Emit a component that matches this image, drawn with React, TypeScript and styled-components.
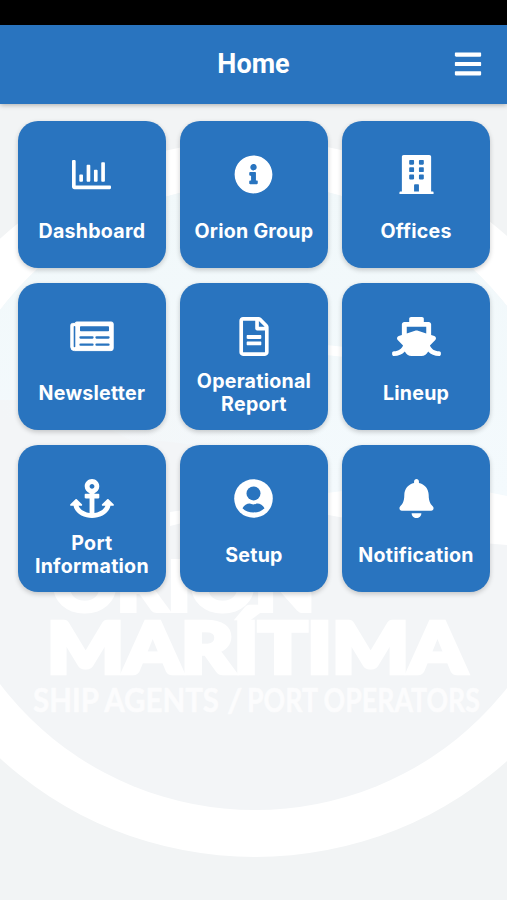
import React from 'react';
import styled, { createGlobalStyle } from 'styled-components';
import { FaRegChartBar, FaInfoCircle, FaBuilding, FaRegFileAlt, FaShip, FaAnchor, FaBell, FaBars } from 'react-icons/fa';

const GlobalStyle = createGlobalStyle`
  * { box-sizing: border-box; }
  body { margin: 0; background: #f2f4f5; }
`;

const Screen = styled.div`
  position: relative;
  width: 507px;
  height: 900px;
  display: flex;
  flex-direction: column;
  overflow: hidden;
  background: #f2f4f5;
  font-family: Inter, "Liberation Sans", sans-serif;
`;

const StatusBar = styled.div`
  position: relative;
  height: 25px;
  flex: none;
  background: #000;
`;

const Header = styled.header`
  position: relative;
  height: 78.5px;
  flex: none;
  display: grid;
  grid-template-columns: 1fr auto 1fr;
  align-items: center;
  padding: 0 24px;
  background: #2974bf;
  color: #fff;
  box-shadow: 0 1px 5px rgba(0, 0, 0, 0.3);
`;

const Title = styled.h1`
  grid-column: 2;
  margin: 0;
  font: 700 27px/32px Roboto, sans-serif;
`;

const MenuButton = styled.button`
  justify-self: end;
  display: flex;
  padding: 0;
  border: 0;
  background: none;
  color: #fff;
`;

const Watermark = styled.svg`
  position: absolute;
  inset: 0;
`;

const Grid = styled.main`
  position: relative;
  display: grid;
  grid-template-columns: repeat(3, 147.4px);
  grid-auto-rows: 147px;
  gap: 15px 14.7px;
  padding: 17.5px 0 0 18.2px;
`;

const Tile = styled.button`
  display: flex;
  flex-direction: column;
  align-items: center;
  padding: 34.4px 0 0;
  border: 0;
  border-radius: 20px;
  background: #2974bf;
  color: #fff;
  box-shadow: 0 2px 5px rgba(0, 0, 0, 0.2);
  font: 700 19.6px/23px Inter, sans-serif;
  letter-spacing: 0.25px;
`;

const TileIcon = styled.span<{ $width: number }>`
  display: flex;
  height: 39px;

  svg {
    width: ${({ $width }) => $width}px;
    height: 39px;
  }
`;

const TileLabel = styled.span`
  display: flex;
  align-items: center;
  justify-content: center;
  width: 130px;
  height: 46px;
  margin-top: 14px;
`;

function NewspaperIcon() {
  return (
    <svg viewBox="0 0 44 39" fill="none">
      <path d="M5.2 6.4H2.6A1.8 1.8 0 0 0 .8 8.2V30a3.6 3.6 0 0 0 3.6 3.6H41A2.2 2.2 0 0 0 43.2 31.4V6.8A1.8 1.8 0 0 0 41.4 5H6.600A1.4 1.4 0 0 0 5.200 6.400Z" fill="#fff" stroke="#fff" strokeWidth="1" strokeLinejoin="round" />
      <path d="M4.5 9.8V29.5" stroke="#2974bf" strokeWidth="1.6" strokeLinecap="round" />
      <rect x="10" y="9.3" width="29" height="5" rx="0.8" fill="#2974bf" />
      <path d="M10.5 20.5H22.5M26.5 20.5H38.5M10.5 27.7H22.5M26.5 27.7H38.5" stroke="#2974bf" strokeWidth="2.3" strokeLinecap="round" />
    </svg>
  );
}

function AccountIcon() {
  return (
    <svg viewBox="0 0 39 39">
      <circle cx="19.5" cy="19.5" r="19.3" fill="#fff" />
      <circle cx="19.5" cy="14.4" r="7" fill="#2974bf" />
      <path d="M8.5 29.2C10 26.2 12.9 24.5 15.6 24.5C17.2 24.5 17.5 25.4 19.5 25.4S21.8 24.5 23.4 24.5C26.1 24.5 29 26.2 30.5 29.2C27.6 32.2 23.9 33.5 19.5 33.5S11.4 32.2 8.5 29.2Z" fill="#2974bf" />
    </svg>
  );
}

const tiles: { label: string; icon: React.ComponentType; width: number }[] = [
  { label: 'Dashboard', icon: FaRegChartBar, width: 39 },
  { label: 'Orion Group', icon: FaInfoCircle, width: 39 },
  { label: 'Offices', icon: FaBuilding, width: 35 },
  { label: 'Newsletter', icon: NewspaperIcon, width: 44 },
  { label: 'Operational Report', icon: FaRegFileAlt, width: 30 },
  { label: 'Lineup', icon: FaShip, width: 49 },
  { label: 'Port Information', icon: FaAnchor, width: 44 },
  { label: 'Setup', icon: AccountIcon, width: 39 },
  { label: 'Notification', icon: FaBell, width: 35 },
];

function WatermarkLogo() {
  return (
    <Watermark width="507" height="900" viewBox="0 0 507 900">
      <defs>
        <clipPath id="disc">
          <ellipse cx="255" cy="497" rx="318" ry="313" />
        </clipPath>
        <linearGradient id="sky" x1="0" y1="0" x2="0" y2="1">
          <stop offset="0" stopColor="#f1f8fa" />
          <stop offset="1" stopColor="#f4fafd" />
        </linearGradient>
        <linearGradient id="fade" x1="0" y1="0" x2="1" y2="0">
          <stop offset="0" stopColor="#f3f5f7" />
          <stop offset="1" stopColor="#f3f5f7" stopOpacity="0" />
        </linearGradient>
      </defs>
      <ellipse cx="255" cy="498.5" rx="370" ry="358.5" fill="#fff" />
      <g clipPath="url(#disc)">
        <rect width="507" height="900" fill="#f3f5f7" />
        <path d="M0 180H507V498Q420 480 327 496Q240 440 130 440Q60 400 0 420Z" fill="url(#sky)" />
        <rect y="400" width="330" height="110" fill="url(#fade)" />
        <path d="M180 350Q270 337 345 347V357Q270 347 180 360Z" fill="#fff" />
        <path d="M170 512Q250 500 327 493Q430 478 507 496V545Q430 540 345 518Q260 500 170 526Z" fill="#fff" />
      </g>
      <g fill="#fff" stroke="#fff" fontFamily="Lato" fontWeight="900">
        <text x="53" y="611" fontSize="68" strokeWidth="4" textLength="262" lengthAdjust="spacingAndGlyphs">ORION</text>
        <text x="47" y="673" fontSize="70" strokeWidth="4.5" textLength="419" lengthAdjust="spacingAndGlyphs">MARÍTIMA</text>
      </g>
      <g fill="#fff" stroke="#fff" strokeWidth="0.6" fontFamily="Lato" fontWeight="700" fontSize="33" opacity="0.75">
        <text x="33" y="712" textLength="186" lengthAdjust="spacingAndGlyphs">SHIP AGENTS</text>
        <text x="227" y="712">/</text>
        <text x="247" y="712" textLength="233" lengthAdjust="spacingAndGlyphs">PORT OPERATORS</text>
      </g>
    </Watermark>
  );
}

export default function App() {
  return (
    <Screen>
      <GlobalStyle />
      <WatermarkLogo />
      <StatusBar />
      <Header>
        <Title>Home</Title>
        <MenuButton aria-label="Menu"><FaBars size={30} /></MenuButton>
      </Header>
      <Grid>
        {tiles.map(({ label, icon: Icon, width }) => (
          <Tile key={label}>
            <TileIcon $width={width}><Icon /></TileIcon>
            <TileLabel>{label}</TileLabel>
          </Tile>
        ))}
      </Grid>
    </Screen>
  );
}
